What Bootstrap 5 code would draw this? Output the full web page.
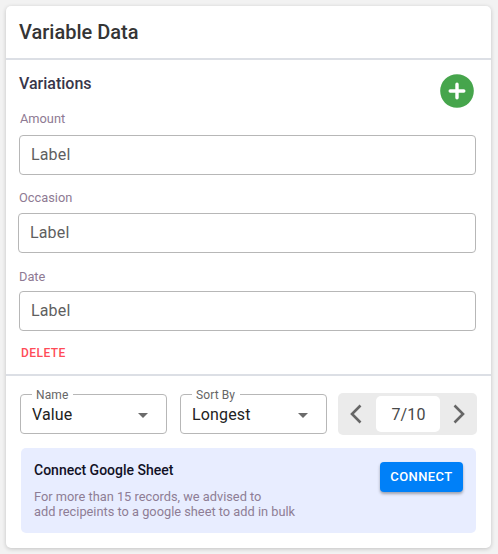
<!DOCTYPE html>
<html lang="en">
<head>
<meta charset="utf-8">
<meta name="viewport" content="width=device-width, initial-scale=1">
<title>Variable Data</title>
<link href="https://cdn.jsdelivr.net/npm/bootstrap@5.3.0/dist/css/bootstrap.min.css" rel="stylesheet">
<style>
body{background:#f2f2f2;font-family:Roboto,"Liberation Sans",sans-serif;height:554px;overflow:hidden;padding:6px 7px 6px 6px}
.panel{height:542px;border:0;border-radius:5px;box-shadow:0 1px 4px rgba(0,0,0,.2)}
.panel-head{height:54px;padding:0 13px;border-bottom:2px solid #dcdfe5}
.panel-head h1{font-size:20px;line-height:24px;color:#353535}
.fields{height:316px;padding:0 15px 0 13px;border-bottom:2px solid #dcdfe5}
.fields-top{height:51px;padding:14px 1px 0 0}
.fields-top h2{font-size:16px;line-height:20px;color:#38364a}
.add-btn{width:34px;height:34px;margin-right:1px}
.field-label{font-size:12.8px;line-height:16px;color:#8e7a93;height:24px}
.field-label.lower{padding-top:1px}
.field-label.lowest{padding-top:2px}
.field-label.inset{padding-left:1px}
.field-box{height:40px;border:1px solid #b7b7b7;border-radius:4px;padding:0 11px 2px;font-size:16px;letter-spacing:.15px;color:#5f5f5f}
.field-box::placeholder{color:#5f5f5f;opacity:1}
.field-group{height:78px}
.shift{margin-left:-1px;width:calc(100% + 1px)}
.delete-btn{font-size:12px;line-height:16px;letter-spacing:.45px;color:#ff4b57;margin-left:2px}
.controls{padding:17px 14px 0 14px}
.outlined{width:147px;height:40px;border:1px solid #b7b7b7;border-radius:4px;padding:2px 18px 0 11px;font-size:16px;letter-spacing:.15px;color:#222;margin-top:1px}
.outlined .caption{left:11px;top:-8px;padding:0 5px 0 4px;font-size:12px;line-height:16px;letter-spacing:.1px;color:#666;background:#fff}
.pager{width:139px;height:42px;background:#ebebeb;border-radius:5px;margin-left:11px}
.pager .count{width:64px;height:36px;border-radius:5px;font-size:16px;color:#484848;letter-spacing:.15px;padding:2px 0 0 1px}
.pager button{height:42px}
.pager .prev{width:38px;padding-right:2px!important}.pager .next{width:37px}
.notice{margin:13px 15px 0;height:85px;border-radius:5px;background:#e8edff;padding:14px 13px 0}
.notice h3{font-size:14px;line-height:16px;color:#111126;margin-bottom:11px}
.notice p{font-size:12.8px;line-height:15px;color:#8e7d95}
.connect-btn{width:83px;height:30px;border-radius:4px;background:#0080f8;color:#fff;font-size:13px;line-height:30px;letter-spacing:.4px;box-shadow:0 2px 3px rgba(0,0,0,.32)}
</style>
</head>
<body>
<main class="card panel">
  <header class="panel-head d-flex align-items-center"><h1 class="fw-medium mb-0">Variable Data</h1></header>
  <section class="fields">
    <div class="fields-top d-flex justify-content-between align-items-start">
      <h2 class="fw-medium mb-0">Variations</h2>
      <button class="btn p-0 border-0 add-btn d-flex" aria-label="Add">
        <svg width="34" height="34" viewBox="0 0 34 34"><circle cx="17" cy="17" r="16.8" fill="#46a54c"/><path d="M17 10.2v13.6M10.2 17h13.6" stroke="#fff" stroke-width="3.4" stroke-linecap="round"/></svg>
      </button>
    </div>
    <div class="field-group"><label class="field-label inset d-block" for="amount">Amount</label><input id="amount" class="form-control field-box" placeholder="Label"></div>
    <div class="field-group"><label class="field-label lower d-block" for="occasion">Occasion</label><input id="occasion" class="form-control field-box shift" placeholder="Label"></div>
    <div class="field-group"><label class="field-label lowest d-block" for="date">Date</label><input id="date" class="form-control field-box" placeholder="Label"></div>
    <button class="btn p-0 border-0 delete-btn fw-medium d-block">DELETE</button>
  </section>
  <div class="controls d-flex align-items-start">
    <div class="outlined position-relative d-flex align-items-center justify-content-between">
      <span class="caption position-absolute">Name</span><span>Value</span>
      <svg width="10" height="5" viewBox="0 0 10 5"><path d="M0 0h10L5 5z" fill="#6b6b6b"/></svg>
    </div>
    <div class="outlined position-relative d-flex align-items-center justify-content-between ms-auto">
      <span class="caption position-absolute">Sort By</span><span>Longest</span>
      <svg width="10" height="5" viewBox="0 0 10 5"><path d="M0 0h10L5 5z" fill="#6b6b6b"/></svg>
    </div>
    <div class="pager d-flex align-items-center">
      <button class="btn p-0 border-0 prev d-flex align-items-center justify-content-center" aria-label="Previous"><svg width="12" height="20" viewBox="0 0 12 20"><path d="M10.5 1.5 2 10l8.5 8.5" fill="none" stroke="#666" stroke-width="2.6"/></svg></button>
      <div class="count bg-white d-flex align-items-center justify-content-center">7/10</div>
      <button class="btn p-0 border-0 next d-flex align-items-center justify-content-center" aria-label="Next"><svg width="12" height="20" viewBox="0 0 12 20"><path d="M1.5 1.5 10 10l-8.5 8.5" fill="none" stroke="#666" stroke-width="2.6"/></svg></button>
    </div>
  </div>
  <section class="notice d-flex justify-content-between align-items-start">
    <div><h3 class="fw-medium">Connect Google Sheet</h3><p class="mb-0">For more than 15 records, we advised to<br>add recipeints to a google sheet to add in bulk</p></div>
    <button class="btn p-0 border-0 connect-btn fw-medium">CONNECT</button>
  </section>
</main>
<script src="https://cdn.jsdelivr.net/npm/bootstrap@5.3.0/dist/js/bootstrap.bundle.min.js"></script>
</body>
</html>
